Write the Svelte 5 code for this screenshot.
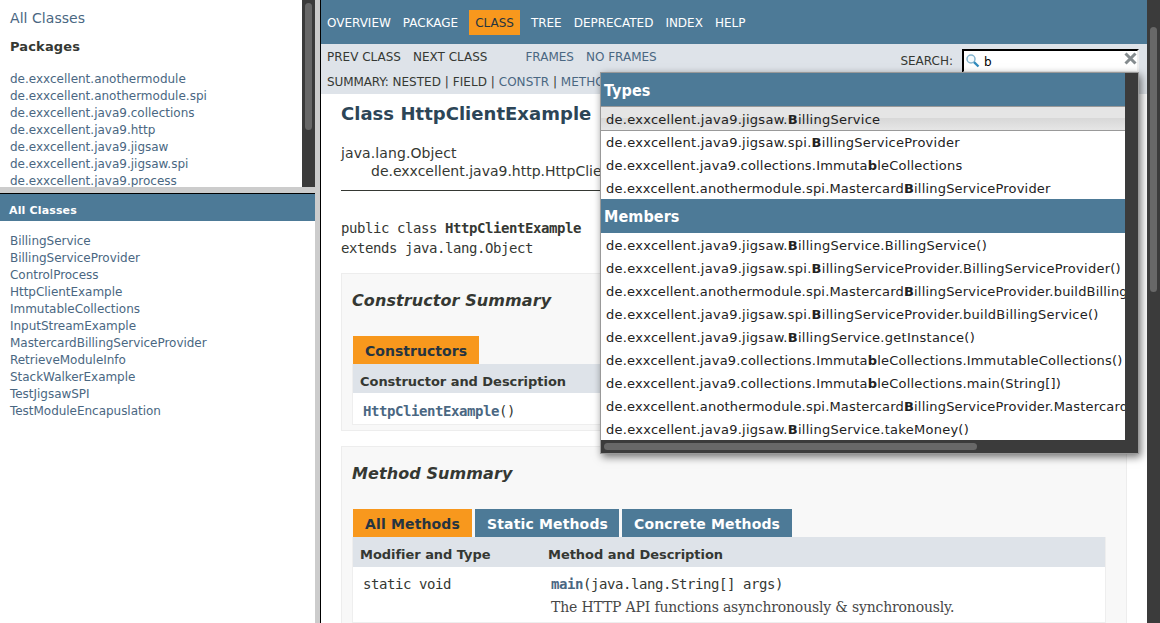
<script>
  const packages = [
    'de.exxcellent.anothermodule', 'de.exxcellent.anothermodule.spi', 'de.exxcellent.java9.collections',
    'de.exxcellent.java9.http', 'de.exxcellent.java9.jigsaw', 'de.exxcellent.java9.jigsaw.spi', 'de.exxcellent.java9.process'
  ];
  const classes = [
    'BillingService', 'BillingServiceProvider', 'ControlProcess', 'HttpClientExample', 'ImmutableCollections',
    'InputStreamExample', 'MastercardBillingServiceProvider', 'RetrieveModuleInfo', 'StackWalkerExample',
    'TestJigsawSPI', 'TestModuleEncapuslation'
  ];
  const nav = ['OVERVIEW', 'PACKAGE', 'CLASS', 'TREE', 'DEPRECATED', 'INDEX', 'HELP'];
  const types = [
    ['de.exxcellent.java9.jigsaw.', 'B', 'illingService'],
    ['de.exxcellent.java9.jigsaw.spi.', 'B', 'illingServiceProvider'],
    ['de.exxcellent.java9.collections.Immuta', 'b', 'leCollections'],
    ['de.exxcellent.anothermodule.spi.Mastercard', 'B', 'illingServiceProvider']
  ];
  const members = [
    ['de.exxcellent.java9.jigsaw.', 'B', 'illingService.BillingService()'],
    ['de.exxcellent.java9.jigsaw.spi.', 'B', 'illingServiceProvider.BillingServiceProvider()'],
    ['de.exxcellent.anothermodule.spi.Mastercard', 'B', 'illingServiceProvider.buildBillingService()'],
    ['de.exxcellent.java9.jigsaw.spi.', 'B', 'illingServiceProvider.buildBillingService()'],
    ['de.exxcellent.java9.jigsaw.', 'B', 'illingService.getInstance()'],
    ['de.exxcellent.java9.collections.Immuta', 'b', 'leCollections.ImmutableCollections()'],
    ['de.exxcellent.java9.collections.Immuta', 'b', 'leCollections.main(String[])'],
    ['de.exxcellent.anothermodule.spi.Mastercard', 'B', 'illingServiceProvider.MastercardBillingServiceProvider()'],
    ['de.exxcellent.java9.jigsaw.', 'B', 'illingService.takeMoney()']
  ];
</script>

<div class="page">
  <aside>
    <div class="packages">
      <div class="pkg-content">
        <a class="all" href="#all">All Classes</a>
        <h2>Packages</h2>
        <ul>{#each packages as p}<li><a href="#p">{p}</a></li>{/each}</ul>
      </div>
      <div class="vbar"><i></i></div>
    </div>
    <div class="split"></div>
    <h1 class="bar">All Classes</h1>
    <ul class="classes">{#each classes as c}<li><a href="#c">{c}</a></li>{/each}</ul>
  </aside>
  <div class="divider"></div>
  <main>
    <nav class="top">{#each nav as n}<span class:active={n === 'CLASS'}>{n}</span>{/each}</nav>
    <div class="sub">
      <div class="links">
        <div class="line"><span class="prev">PREV CLASS</span><span class="next">NEXT CLASS</span><a class="frames" href="#f">FRAMES</a><a href="#n">NO FRAMES</a></div>
        <div class="line summary"><span class="label">SUMMARY:&nbsp;</span>NESTED&nbsp;|&nbsp;FIELD&nbsp;|&nbsp;<a href="#k">CONSTR</a>&nbsp;|&nbsp;<a href="#m">METHOD</a></div>
      </div>
      <div class="search">
        <span>SEARCH:</span>
        <div class="field">
          <svg width="14" height="14" viewBox="0 0 14 14"><circle cx="5" cy="5" r="4" fill="#f4fafd" stroke="#84b5cf" stroke-width="1.5"/><path d="M8 8.2 12.5 12.5" stroke="#318bbd" stroke-width="2.4"/></svg>
          <b>b</b>
          <svg class="clear" width="13" height="13" viewBox="0 0 12 12"><path d="M1.4 1.4 10.6 10.6M10.6 1.4 1.4 10.6" stroke="#848b8e" stroke-width="2.8"/></svg>
        </div>
      </div>
    </div>
    <div class="content">
      <h2 class="title">Class HttpClientExample</h2>
      <div class="tree"><div class="root">java.lang.Object</div><div class="child">de.exxcellent.java9.http.HttpClientExample</div></div>
      <pre>public class <b>HttpClientExample</b>
extends java.lang.Object</pre>
      <section class="ctor">
        <h3>Constructor Summary</h3>
        <div class="tabs"><span class="on">Constructors</span></div>
        <div class="table">
          <div class="head"><span>Constructor and Description</span></div>
          <div class="cell code"><b>HttpClientExample</b>()</div>
        </div>
      </section>
      <section class="methods">
        <h3>Method Summary</h3>
        <div class="tabs"><span class="on">All Methods</span><span>Static Methods</span><span>Concrete Methods</span></div>
        <div class="table">
          <div class="head"><span>Modifier and Type</span><span>Method and Description</span></div>
          <div class="row"><div class="code">static void</div><div><div class="code"><b>main</b>(java.lang.String[] args)</div><p>The HTTP API functions asynchronously &amp; synchronously.</p></div></div>
        </div>
      </section>
    </div>
    <div class="popup">
      <div class="results">
        <h4>Types</h4>
        {#each types as [a, m, z], i}<div class="item" class:wide={a.includes('jigsaw')} class:selected={i === 0}>{a}<b>{m}</b>{z}</div>{/each}
        <h4>Members</h4>
        {#each members as [a, m, z]}<div class="item" class:wide={a.includes('jigsaw')}>{a}<b>{m}</b>{z}</div>{/each}
      </div>
      <div class="hbar"><i></i></div>
    </div>
  </main>
  <div class="vbar window"><i></i></div>
</div>

<style>
  :global(body) { margin: 0; overflow: hidden; background: #fff; }
  * { box-sizing: border-box; }
  h1, h2, h3, h4, p, ul, pre { margin: 0; padding: 0; }
  ul { list-style: none; }
  a { color: #4a6782; text-decoration: none; }
  .page { display: grid; grid-template-columns: 315px 6px 826px 13px; width: 1160px; height: 623px; overflow: hidden; color: #353833; font: 14px 'DejaVu Sans', sans-serif; }
  aside { min-width: 0; }
  .packages { display: flex; height: 187px; overflow: hidden; }
  .pkg-content { flex: 1; padding: 8px 0 0 10px; }
  .all { display: block; line-height: 20px; height: 20px; letter-spacing: .05px; }
  h2 { font-size: 13px; line-height: 20px; margin-top: 9px; letter-spacing: .15px; }
  ul { margin-top: 14px; font-size: 12px; }
  li { height: 17px; line-height: 17px; }
  .vbar { width: 13px; background: #3b3b3b; padding: 3px 3px 0; }
  .vbar i { display: block; height: 127px; border-radius: 4px; background: #686868; }
  .window { padding-top: 27px; }
  .window i { height: 265px; }
  .split { height: 7px; background: #ccc; border-bottom: 1px solid #000; }
  .bar { height: 27px; padding: 4px 0 0 9px; background: #4d7a97; color: #fff; font-size: 11px; line-height: 26px; letter-spacing: .15px; }
  .classes { padding-left: 10px; margin-top: 12px; letter-spacing: -.03px; }
  .divider { background: #ccc; border-right: 1px solid #000; }
  main { position: relative; height: 623px; overflow: hidden; min-width: 0; }
  .top { display: flex; height: 44px; padding: 10px 0 0; background: #4d7a97; color: #fff; font-size: 12px; line-height: 27px; }
  .top span { height: 25px; padding: 0 6px; letter-spacing: -.01px; }
  .top .active { background: #f8981d; color: #253441; margin: 0 5px; }
  .sub { display: flex; justify-content: space-between; height: 50px; background: #dee3e9; font-size: 12px; }
  .links { padding-left: 6px; }
  .line { display: flex; height: 25px; line-height: 27px; white-space: nowrap; }
  .label { letter-spacing: -.12px; }
  .summary { letter-spacing: .04px; }
  .next { margin-left: 12px; }
  .frames { margin: 0 12px 0 38px; }
  .search { display: flex; padding: 5px 8px 0 0; line-height: 25px; }
  .field { display: flex; width: 177px; height: 24px; margin-left: 9px; padding: 3px 0 0 2px; border: 2px inset #eee; border-color: #202224 #eee #eee #202224; background: #fff; }
  .field b { font-weight: 400; font-size: 12px; line-height: 16px; margin-left: 4px; color: #000; }
  .clear { margin: -2px 0 0 auto; }
  .content { padding: 9px 20px 0; }
  .title { font-size: 18px; line-height: 22px; color: #2c4557; margin: 0; letter-spacing: .03px; }
  .tree { margin-top: 19px; line-height: 18px; height: 47px; border-bottom: 1px solid #353833; }
  .root { letter-spacing: .1px; }
  .child { padding-left: 30px; }
  pre, .code { font-family: 'DejaVu Sans Mono', monospace; font-size: 14px; letter-spacing: -.43px; }
  pre { margin-top: 27px; line-height: 20px; }
  section { width: 786px; border: 1px solid #ededed; background: #f8f8f8; padding: 17px 20px 5px 10px; }
  .ctor { height: 158px; margin-top: 15px; }
  .methods { margin-top: 15px; height: 300px; }
  h3 { font-size: 16px; font-style: italic; line-height: 20px; letter-spacing: .09px; }
  .tabs { display: grid; grid-template-columns: 126px; gap: 3px; height: 28px; margin: 25px 0 0 1px; letter-spacing: .04px; }
  .methods .tabs { grid-template-columns: 119px 144px 170px; letter-spacing: .15px; }
  .tabs span { height: 28px; padding: 2px 0 0 12px; background: #4d7a97; color: #fff; font-weight: 700; line-height: 26px; white-space: nowrap; }
  .tabs .on { background: #f8981d; color: #253441; }
  .table { width: 754px; border: 1px solid #eee; border-top: 0; background: #fff; }
  .head { display: grid; grid-template-columns: 188px 1fr; height: 29px; padding: 2px 7px 0; background: #dee3e9; font-size: 13px; font-weight: 700; line-height: 31px; white-space: nowrap; letter-spacing: -.04px; }
  .methods .head { height: 30px; }
  .cell { height: 31px; padding-left: 10px; line-height: 37px; }
  .code b { color: #4a6782; }
  .row { display: grid; grid-template-columns: 188px 1fr; height: 55px; padding: 8px 10px 0; line-height: 19px; }
  p { font: 14px/20px 'DejaVu Serif', serif; color: #474747; margin-top: 3px; white-space: nowrap; letter-spacing: -.17px; }
  .popup { position: absolute; left: 279px; top: 72px; width: 539px; height: 382px; border: 1px solid #999; background: #3b3b3b; box-shadow: 2px 3px 8px rgba(0,0,0,.55); color: #222; }
  .results { width: 524px; height: 367px; overflow: hidden; background: #fff; }
  h4 { height: 34px; padding: 0 3px; line-height: 35px; font-family: 'DejaVu Sans Condensed', 'DejaVu Sans', sans-serif; font-stretch: condensed; font-size: 16px; letter-spacing: .1px; background: #4d7a97; color: #fff; }
  .item { height: 23px; padding-left: 5px; line-height: 26px; font-size: 13px; white-space: nowrap; letter-spacing: .19px; }
  .wide { letter-spacing: .265px; }
  .selected { margin-top: -1px; height: 25px; line-height: 25px; border: solid #999; border-width: 1px 0; background: linear-gradient(#e5e5e5 0 48%, #d8d8d8 50%, #e6e6e6); }
  .selected + .item { margin-top: -1px; }
  .hbar { padding: 3px; }
  .hbar i { display: block; width: 373px; height: 7px; border-radius: 4px; background: #686868; }
</style>
